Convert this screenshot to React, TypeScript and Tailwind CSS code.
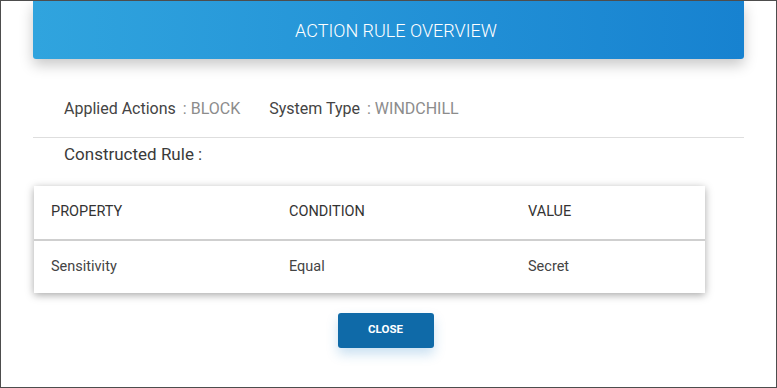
const font = { fontFamily: 'Roboto, "Liberation Sans", sans-serif' };

const rows = [{ property: 'Sensitivity', condition: 'Equal', value: 'Secret' }];

export default function App() {
  return (
    <div
      className="h-[388px] w-[777px] overflow-hidden border border-[#4d4d4d] bg-white"
      style={font}
    >
      <div className="px-[32px]">
        <div className="flex h-[58px] items-center justify-center rounded-b-[3px] bg-gradient-to-r from-[#30a4de] to-[#1782d0] pl-[15px] shadow-[0_6px_14px_rgba(0,0,0,0.22)]">
          <h2 className="text-[18px] font-light text-white">ACTION RULE OVERVIEW</h2>
        </div>

        <div className="flex h-[79px] items-center gap-[29px] border-b border-[#dedede] pl-[31px] pt-[22px] text-[16px]">
          <div>
            <span className="text-[#444]">Applied Actions</span>
            <span className="ml-[7px] text-[#8c8c8c]">: BLOCK</span>
          </div>
          <div>
            <span className="text-[#444]">System Type</span>
            <span className="ml-[7px] text-[#8c8c8c]">: WINDCHILL</span>
          </div>
        </div>

        <p className="pl-[31px] pt-[4px] text-[17px] text-[#3a3a3a]">Constructed Rule :</p>

        <div className="ml-[1px] mt-[18px] w-[671px] bg-white shadow-[0_2px_8px_rgba(0,0,0,0.35)]">
          <div className="grid h-[55px] grid-cols-[238px_239px_1fr] items-center border-b-2 border-[#cfcfcf] pl-[17px] text-[14.5px] text-[#333]">
            <span>PROPERTY</span>
            <span>CONDITION</span>
            <span>VALUE</span>
          </div>
          {rows.map((r) => (
            <div
              key={r.property}
              className="grid h-[52px] grid-cols-[238px_239px_1fr] items-center pl-[17px] text-[14.5px] text-[#444]"
            >
              <span>{r.property}</span>
              <span>{r.condition}</span>
              <span>{r.value}</span>
            </div>
          ))}
        </div>

        <div className="mt-[20px] flex justify-center pr-[6px]">
          <button className="h-[35px] w-[96px] rounded-[3px] bg-[#0f6aa8] text-[11.5px] font-bold text-white shadow-[0_6px_12px_rgba(40,130,200,0.25)]">
            CLOSE
          </button>
        </div>
      </div>
    </div>
  );
}
